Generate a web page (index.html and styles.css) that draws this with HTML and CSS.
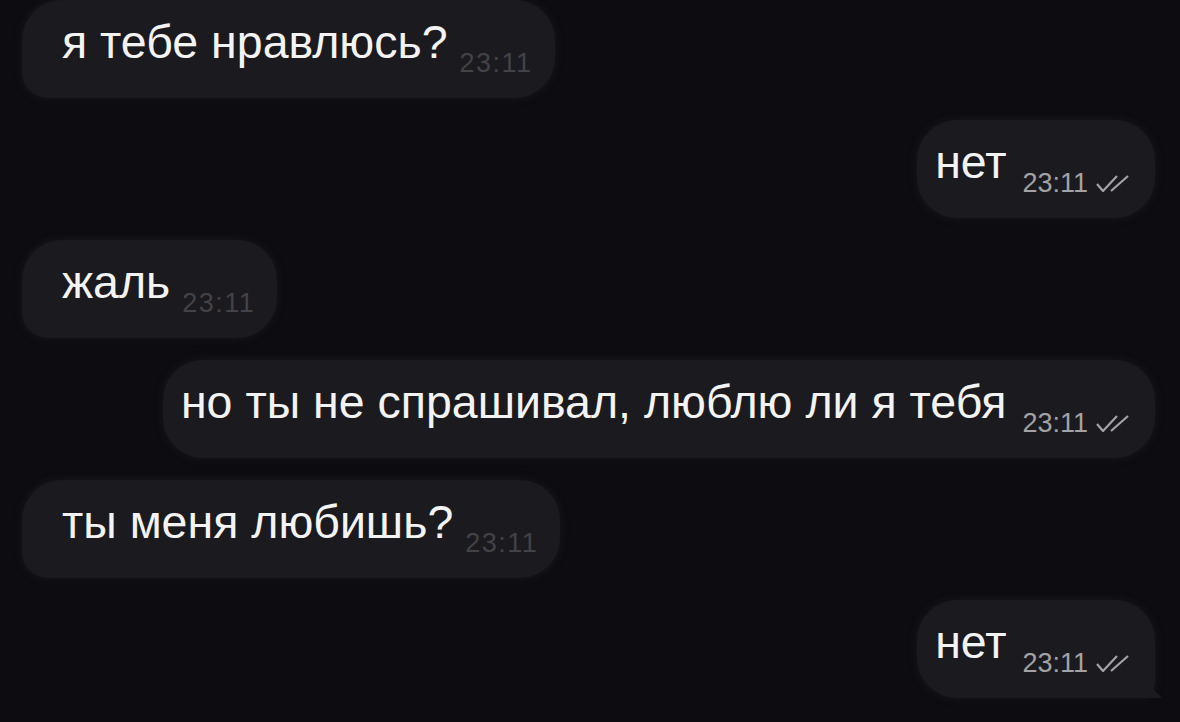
FILE: index.html
```html
<!DOCTYPE html>
<html lang="ru">
<head>
  <meta charset="UTF-8">
  <title>Чат</title>
  <link rel="stylesheet" href="styles.css">
</head>
<body>
  <div class="chat">
    <div class="msg in">
      <div class="bubble">
        <span class="text">я тебе нравлюсь?</span>
        <span class="meta">23:11</span>
      </div>
    </div>

    <div class="msg out">
      <div class="bubble">
        <span class="text">нет</span>
        <span class="meta">23:11
          <svg class="checks" width="34" height="17" viewBox="0 0 34 17"><path d="M1 9 L7 16 L21 1 M15 16 L32 1"/></svg>
        </span>
      </div>
    </div>

    <div class="msg in">
      <div class="bubble">
        <span class="text">жаль</span>
        <span class="meta">23:11</span>
      </div>
    </div>

    <div class="msg out">
      <div class="bubble">
        <span class="text">но ты не спрашивал, люблю ли я тебя</span>
        <span class="meta">23:11
          <svg class="checks" width="34" height="17" viewBox="0 0 34 17"><path d="M1 9 L7 16 L21 1 M15 16 L32 1"/></svg>
        </span>
      </div>
    </div>

    <div class="msg in">
      <div class="bubble">
        <span class="text">ты меня любишь?</span>
        <span class="meta">23:11</span>
      </div>
    </div>

    <div class="msg out">
      <div class="bubble tail">
        <span class="text">нет</span>
        <span class="meta">23:11
          <svg class="checks" width="34" height="17" viewBox="0 0 34 17"><path d="M1 9 L7 16 L21 1 M15 16 L32 1"/></svg>
        </span>
      </div>
    </div>
  </div>
</body>
</html>
```

FILE: styles.css
```css
:root {
  --bg: #0d0c11;
  --bubble: #1b1a1e;
  --text: #f3f3f3;
}
body {
  margin: 0;
  background: var(--bg);
  font-family: 'Liberation Sans', Arial, sans-serif;
  overflow: hidden;
}
.chat {
  display: flex;
  flex-direction: column;
  gap: 22px;
  height: 722px;
}
.msg {
  display: flex;
}
.msg.in {
  justify-content: flex-start;
  padding-left: 22px;
}
.msg.out {
  justify-content: flex-end;
  padding-right: 25px;
}
.bubble {
  position: relative;
  height: 98px;
  box-sizing: border-box;
  display: flex;
  align-items: flex-start;
  background: var(--bubble);
  border-radius: 40px;
  box-shadow: 0 0 6px 2px rgba(27, 26, 30, 0.6);
}
.in .bubble {
  padding: 16px 22px 0 40px;
  border-bottom-left-radius: 26px;
}
.out .bubble {
  padding: 16px 25px 0 18px;
}
.text {
  color: var(--text);
  font-size: 46.5px;
  line-height: 52px;
  white-space: nowrap;
}
.meta {
  margin-top: 32px;
  margin-left: 12px;
  font-size: 27px;
  line-height: 30px;
  white-space: nowrap;
  display: flex;
  align-items: center;
  gap: 8px;
}
.in .meta {
  color: #434247;
  letter-spacing: 1.5px;
}
.out .meta {
  margin-left: 16px;
  color: #a3a3a6;
}
.checks path {
  fill: none;
  stroke: #a3a3a6;
  stroke-width: 2.2;
}
/* хвостик у последнего сообщения */
.tail {
  border-bottom-right-radius: 16px;
}
.tail::after {
  content: "";
  position: absolute;
  right: -7px;
  bottom: 0;
  width: 24px;
  height: 24px;
  background: var(--bubble);
  clip-path: polygon(0 0, 100% 100%, 0 100%);
}
```
